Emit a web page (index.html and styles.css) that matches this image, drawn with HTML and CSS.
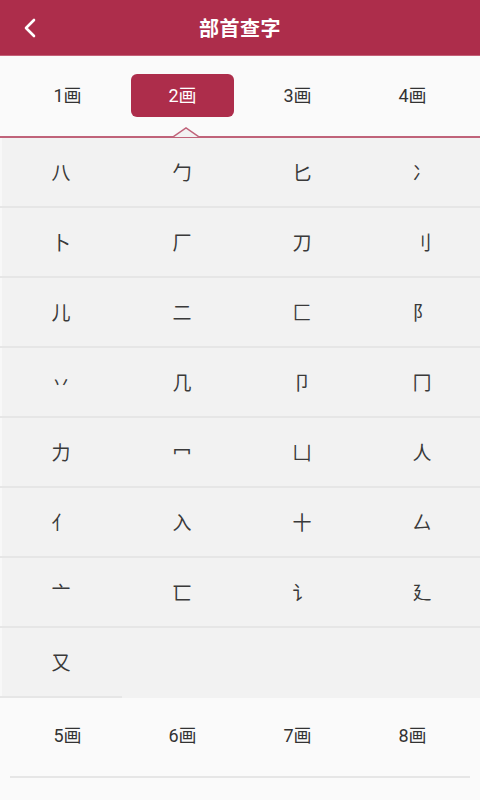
FILE: index.html
```html
<!DOCTYPE html>
<html lang="zh">
<head>
<meta charset="utf-8">
<link rel="stylesheet" href="styles.css">
</head>
<body>
<header class="bar">
  <svg class="back" width="14" height="20" viewBox="0 0 14 20"><path d="M11 2 L3 10 L11 18" fill="none" stroke="#fff" stroke-width="2.6" stroke-linecap="round" stroke-linejoin="round"/></svg>
  <h1 class="title">部首查字</h1>
</header>
<nav class="tabs top">
  <div class="tab">1画</div>
  <div class="tab active">2画</div>
  <div class="tab">3画</div>
  <div class="tab">4画</div>
  <svg class="caret" width="26" height="11" viewBox="0 0 26 11"><path d="M0 10 L13 1 L26 10" fill="#f2f2f2" stroke="#c0637a" stroke-width="1.5"/></svg>
</nav>
<section class="grid">
  <div class="cell">八</div><div class="cell">勹</div><div class="cell">匕</div><div class="cell">冫</div>
  <div class="cell">卜</div><div class="cell">厂</div><div class="cell">刀</div><div class="cell">刂</div>
  <div class="cell">儿</div><div class="cell">二</div><div class="cell">匚</div><div class="cell">阝</div>
  <div class="cell">丷</div><div class="cell">几</div><div class="cell">卩</div><div class="cell">冂</div>
  <div class="cell">力</div><div class="cell">冖</div><div class="cell">凵</div><div class="cell">人</div>
  <div class="cell">亻</div><div class="cell">入</div><div class="cell">十</div><div class="cell">厶</div>
  <div class="cell">亠</div><div class="cell">匸</div><div class="cell">讠</div><div class="cell">廴</div>
  <div class="cell">又</div>
</section>
<nav class="tabs bottom">
  <div class="tab">5画</div>
  <div class="tab">6画</div>
  <div class="tab">7画</div>
  <div class="tab">8画</div>
</nav>
</body>
</html>
```
FILE: styles.css
```css
* { box-sizing: border-box; }
html, body { margin: 0; padding: 0; }
body {
  width: 480px;
  height: 800px;
  overflow: hidden;
  background: #fafafa;
  font-family: "Noto Sans CJK SC", "Noto Sans", Roboto, sans-serif;
  color: #333;
}
.bar {
  height: 56px;
  background: #ad2d4b;
  display: flex;
  align-items: center;
  justify-content: center;
  position: relative;
  border-bottom: 1px solid #c46077;
}
.back {
  position: absolute;
  left: 23px;
  top: 18px;
}
.title {
  margin: 0;
  font-size: 20px;
  font-weight: 700;
  color: #fff;
  letter-spacing: 0.5px;
}
.tabs {
  display: grid;
  grid-template-columns: repeat(4, 1fr);
  align-items: center;
  height: 80px;
  background: #fafafa;
  position: relative;
  padding: 0 10px;
}
.tabs.top {
  border-bottom: 2px solid #c0637a;
  height: 82px;
  padding-bottom: 2px;
}
.tab {
  font-family: Roboto, "Noto Sans CJK SC", sans-serif;
  font-size: 18px;
  text-align: center;
  line-height: 43px;
  height: 43px;
  margin: 0 6px;
  border-radius: 6px;
  color: #333;
}
.tab.active {
  background: #ad2d4b;
  color: #fff;
}
.caret {
  position: absolute;
  left: 173px;
  bottom: -2px;
}
.tabs.bottom {
  height: 80px;
  margin: 0 10px;
  padding: 0 0 4px;
  border-bottom: 2px solid #e6e6e6;
}
.grid {
  display: grid;
  grid-template-columns: repeat(4, 120px);
  grid-auto-rows: 70px;
  background: #f2f2f2;
  border-left: 2px solid #f8f8f8;
}
.cell {
  display: flex;
  align-items: center;
  justify-content: center;
  font-size: 19px;
  color: #3a3a3a;
  border-bottom: 2px solid #e6e6e6;
  padding-bottom: 1px;
}
.cell:nth-child(4n+1) { margin-left: -2px; }
```
